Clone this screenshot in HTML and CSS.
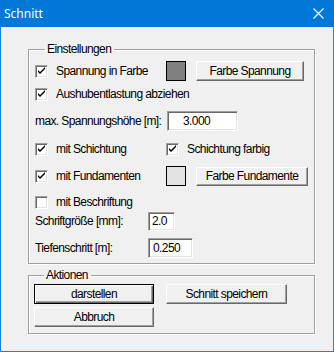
FILE: index.html
```html
<!DOCTYPE html>
<html lang="de">
<head>
    <meta charset="UTF-8">
    <title>Schnitt</title>
    <link rel="stylesheet" href="styles.css">
</head>
<body>
    <div class="window">
        <div class="titlebar">
            <span class="title">Schnitt</span>
            <svg class="close" width="11" height="11" viewBox="0 0 11 11">
                <path d="M0.5 0.5 L10.5 10.5 M10.5 0.5 L0.5 10.5" stroke="#fff" stroke-width="1.1" fill="none"/>
            </svg>
        </div>
        <div class="content">
            <fieldset class="group settings">
                <legend>Einstellungen</legend>
                <div class="row r1">
                    <div class="col-left check"><span class="box checked"></span>Spannung in Farbe</div>
                    <span class="swatch dark"></span>
                    <button class="btn wide">Farbe Spannung</button>
                </div>
                <div class="row r2">
                    <div class="check"><span class="box checked"></span>Aushubentlastung abziehen</div>
                </div>
                <div class="row r3">
                    <label class="lbl-max">max. Spannungshöhe [m]:</label>
                    <input class="field f-max" type="text" value="3.000">
                </div>
                <div class="row r4">
                    <div class="col-left check"><span class="box checked"></span>mit Schichtung</div>
                    <div class="check"><span class="box checked"></span>Schichtung farbig</div>
                </div>
                <div class="row r5">
                    <div class="col-left check"><span class="box checked"></span>mit Fundamenten</div>
                    <span class="swatch light"></span>
                    <button class="btn wide2">Farbe Fundamente</button>
                </div>
                <div class="row r6">
                    <div class="check"><span class="box"></span>mit Beschriftung</div>
                </div>
                <div class="row r7">
                    <label class="lbl-small">Schriftgröße [mm]:</label>
                    <input class="field f-font" type="text" value="2.0">
                </div>
                <div class="row r8">
                    <label class="lbl-small">Tiefenschritt [m]:</label>
                    <input class="field f-step" type="text" value="0.250">
                </div>
            </fieldset>
            <fieldset class="group actions">
                <legend>Aktionen</legend>
                <div class="action-grid">
                    <button class="btn default">darstellen</button>
                    <button class="btn">Schnitt speichern</button>
                    <button class="btn">Abbruch</button>
                </div>
            </fieldset>
        </div>
    </div>
    <script>
        document.querySelectorAll(".check").forEach(function (item) {
            item.addEventListener("click", function () {
                item.querySelector(".box").classList.toggle("checked");
            });
        });
    </script>
</body>
</html>
```

FILE: styles.css
```css
body {
    margin: 0;
    padding: 0;
    font-family: "Liberation Sans", Arial, sans-serif;
    font-size: 12px;
    letter-spacing: -0.6px;
    white-space: nowrap;
    color: #000;
}

.window {
    width: 334px;
    height: 352px;
    box-sizing: border-box;
    background-color: #f0f0f0;
    border: 1px solid #1883d7;
    border-top: none;
}

.titlebar {
    height: 26px;
    margin: 0 -1px;
    background-color: #0078d7;
    display: flex;
    align-items: center;
    justify-content: space-between;
    padding: 0 10px 1px 4px;
}

.title {
    font-family: "Noto Sans", sans-serif;
    font-size: 12px;
    letter-spacing: 0;
    color: #fff;
}

.content {
    padding: 15px 18px 0 27px;
}

.group {
    margin: 0;
    padding: 0;
    border: 1px solid #a0a0a0;
    box-shadow: 1px 1px 0 #fff, inset 1px 1px 0 #fff;
}

.group legend {
    margin-left: 10px;
    padding: 0 3px 0 2px;
    line-height: 14px;
}

.settings {
    padding: 5px 0 5px 6px;
}

.row {
    display: flex;
    align-items: center;
    height: 20px;
}

.r2 { margin-top: 3px; }
.r3 { margin-top: 7px; }
.r4 { margin-top: 8px; }
.r5 { margin-top: 7px; }
.r6 { margin-top: 7px; height: 18px; }
.r7 { margin-top: 0; }
.r8 { margin-top: 7px; }

.col-left {
    width: 131px;
}

.check {
    display: flex;
    align-items: center;
    cursor: default;
}

.box {
    width: 13px;
    height: 13px;
    flex: none;
    box-sizing: border-box;
    margin-right: 8px;
    background-color: #fff;
    border: 1px solid;
    border-color: #a0a0a0 #fff #fff #a0a0a0;
    box-shadow: inset 1px 1px 0 #696969, inset -1px -1px 0 #e3e3e3;
}

.box.checked {
    background-image: url("data:image/svg+xml,%3Csvg xmlns='http://www.w3.org/2000/svg' width='11' height='11'%3E%3Cpath d='M2 4 L2 6 L4 8 L9 3 L9 1 L4 6 Z' fill='%23000'/%3E%3C/svg%3E");
    background-position: center;
}

.swatch {
    width: 20px;
    height: 20px;
    flex: none;
    box-sizing: border-box;
    border: 1px solid #000;
    margin-right: 10px;
}

.swatch.dark {
    background-color: #808080;
}

.swatch.light {
    background-color: #e3e3e3;
}

.btn {
    height: 20px;
    box-sizing: border-box;
    padding: 0;
    font: inherit;
    letter-spacing: inherit;
    white-space: nowrap;
    background-color: #f0f0f0;
    border: 1px solid;
    border-color: #fff #696969 #696969 #fff;
    box-shadow: inset -1px -1px 0 #a0a0a0;
}

.wide { width: 108px; }
.wide2 { width: 112px; height: 19px; }

.btn.default {
    border-color: #000;
    box-shadow: inset 1px 1px 0 #fff, inset -1px -1px 0 #696969, inset -2px -2px 0 #a0a0a0;
}

.field {
    height: 20px;
    box-sizing: border-box;
    padding: 0 0 0 3px;
    font: inherit;
    letter-spacing: inherit;
    background-color: #fff;
    border: 1px solid;
    border-color: #a0a0a0 #fff #fff #a0a0a0;
    box-shadow: inset 1px 1px 0 #696969, inset -1px -1px 0 #e3e3e3;
    outline: none;
}

.lbl-max { width: 132px; }
.lbl-small { width: 113px; }

.f-max { width: 71px; padding-left: 15px; }
.f-font { width: 27px; height: 19px; }
.f-step { width: 45px; padding-left: 4px; }

.actions {
    margin-top: 4px;
    padding: 2px 0 6px 5px;
}

.action-grid {
    display: grid;
    grid-template-columns: 120px 121px;
    column-gap: 12px;
    row-gap: 3px;
}
```
